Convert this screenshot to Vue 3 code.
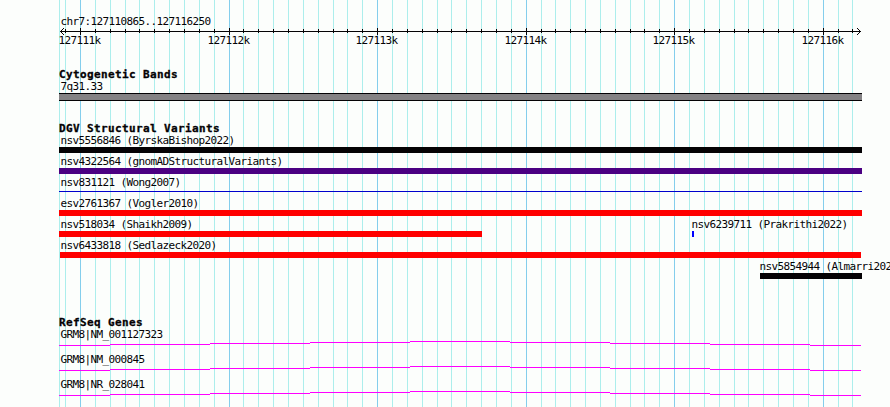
<template>
  <main class="browser">
    <svg class="panel" width="890" height="407" viewBox="0 0 890 407">
      <!-- Grid -->
      <rect
        v-for="x in gridLines"
        :key="'grid' + x"
        :class="isMajor(x) ? 'grid-major' : 'grid-minor'"
        :x="x"
        y="0"
        width="1"
        height="407"
      />

      <!-- Ruler -->
      <text class="label" x="60.4" y="25">chr7:127110865..127116250</text>
      <rect class="ink" x="60" y="31" width="801" height="1" />
      <path class="arrow" d="M64 28 L60.5 31.5 L64 35 M857 28 L860.5 31.5 L857 35" />
      <rect
        v-for="x in ticks"
        :key="'tick' + x"
        class="ink"
        :x="x"
        :y="isMajor(x) ? 28 : 29"
        width="1"
        :height="isMajor(x) ? 7 : 4"
      />
      <text v-for="(x, i) in majorLines" :key="'pos' + x" class="label" :x="x - 21.4" y="44">{{ 127111 + i }}k</text>

      <!-- Cytogenetic bands -->
      <text class="heading" x="59" y="78">Cytogenetic Bands</text>
      <text class="label" x="60.4" y="90">7q31.33</text>
      <rect class="ink" x="59" y="93" width="803" height="8" />
      <rect class="band" x="59" y="94" width="803" height="6" />

      <!-- Structural variants -->
      <text class="heading" x="59" y="132">DGV Structural Variants</text>
      <g v-for="v in variants" :key="v.name">
        <text class="label" :x="v.labelX" :y="v.y - 3">{{ v.name }}</text>
        <rect
          :x="v.start"
          :y="v.thin ? v.y + 2 : v.y"
          :width="v.end - v.start"
          :height="v.thin ? 1 : 6"
          :fill="v.color"
        />
      </g>

      <!-- Genes -->
      <text class="heading" x="59" y="326">RefSeq Genes</text>
      <g v-for="gene in genes" :key="gene.name">
        <text class="label" x="60.4" :y="gene.y - 7">{{ gene.name }}</text>
        <rect
          v-for="s in intronSteps"
          :key="s.start"
          class="intron"
          :x="s.start"
          :y="gene.y - s.rise"
          :width="s.end - s.start"
          height="1"
        />
      </g>
    </svg>
  </main>
</template>

<script setup>
const majorLines = [80, 229, 377, 526, 674, 823]

const gridLines = [
  59, 65, 80, 95, 110, 125, 139, 154, 169, 184, 199, 214, 229,
  243, 258, 273, 288, 303, 318, 333, 347, 362, 377,
  392, 407, 422, 437, 451, 466, 481, 496, 511, 526,
  541, 555, 570, 585, 600, 615, 630, 644, 659, 674,
  689, 704, 719, 734, 748, 763, 778, 793, 808, 823, 838, 852
]

// The panel edge has no tick
const ticks = gridLines.slice(1)

const isMajor = (x) => majorLines.includes(x)

const variants = [
  { name: 'nsv5556846 (ByrskaBishop2022)', labelX: 60.4, start: 59, end: 862, y: 147, color: '#040204' },
  { name: 'nsv4322564 (gnomADStructuralVariants)', labelX: 60.4, start: 59, end: 862, y: 168, color: '#4b0082' },
  { name: 'nsv831121 (Wong2007)', labelX: 60.4, start: 59, end: 862, y: 189, color: '#0000cc', thin: true },
  { name: 'esv2761367 (Vogler2010)', labelX: 60.4, start: 59, end: 862, y: 210, color: '#ff0000' },
  { name: 'nsv518034 (Shaikh2009)', labelX: 60.4, start: 59, end: 482, y: 231, color: '#ff0000' },
  { name: 'nsv6239711 (Prakrithi2022)', labelX: 691.4, start: 692, end: 694, y: 231, color: '#0000ff' },
  { name: 'nsv6433818 (Sedlazeck2020)', labelX: 60.4, start: 60, end: 861, y: 252, color: '#ff0000' },
  { name: 'nsv5854944 (Almarri2022)', labelX: 759.4, start: 760, end: 862, y: 273, color: '#040204' }
]

const genes = [
  { name: 'GRM8|NM_001127323', y: 345 },
  { name: 'GRM8|NM_000845', y: 370 },
  { name: 'GRM8|NR_028041', y: 395 }
]

// Introns rise to the middle of the panel and fall again
const stops = [59, 110, 210, 310, 410, 510, 610, 710, 810, 861]
const intronSteps = stops.slice(0, -1).map((start, i) => ({
  start,
  end: stops[i + 1],
  rise: 4 - Math.abs(4 - i)
}))
</script>

<style>
body {
  background: #fcfefc;
}
</style>

<style scoped>
.browser {
  width: 890px;
  height: 407px;
  overflow: hidden;
  background: #fcfefc;
}

.panel {
  display: block;
  shape-rendering: crispEdges;
}

.grid-minor {
  fill: #aceeec;
}

.grid-major {
  fill: #84ceec;
}

.label {
  font-family: "DejaVu Sans Mono", monospace;
  font-size: 11px;
  letter-spacing: -0.622px;
  fill: #040204;
}

.heading {
  font-family: "DejaVu Sans Mono", monospace;
  font-size: 11px;
  font-weight: 700;
  letter-spacing: 0.378px;
  fill: #040204;
  stroke: #040204;
  stroke-width: 0.3px;
}

.arrow {
  fill: none;
  stroke: #040204;
  stroke-width: 1;
}

.ink {
  fill: #040204;
}

.band {
  fill: #848284;
}

.intron {
  fill: #ff00ff;
}
</style>
